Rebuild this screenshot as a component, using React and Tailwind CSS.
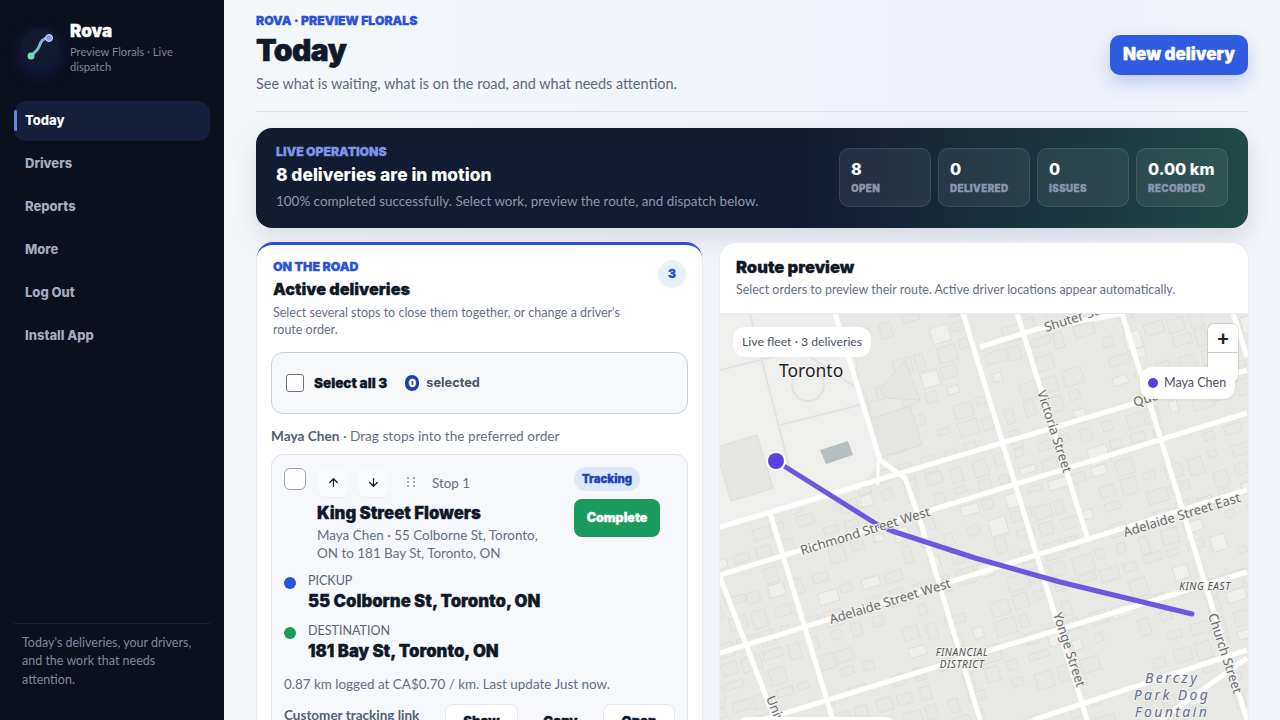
import React from 'react';
import { ArrowUp, ArrowDown } from 'lucide-react';

const HEAVY = "font-['Inter'] font-black [-webkit-text-stroke:0.3px]";

const NAV = ['Today', 'Drivers', 'Reports', 'More', 'Log Out', 'Install App'];

const STATS = [
  { value: '8', label: 'OPEN' },
  { value: '0', label: 'DELIVERED' },
  { value: '0', label: 'ISSUES' },
  { value: '0.00 km', label: 'RECORDED' },
];

const ROADS = [
  [720, 527, 1247, 370],
  [720, 575, 1247, 413],
  [720, 653, 1247, 490],
  [720, 733, 1247, 572],
  [1033, 720, 1247, 650],
  [1160, 720, 1247, 658],
  [980, 347, 1050, 325],
  [1047, 327, 1120, 314],
  [720, 577, 775, 720],
  [770, 513, 833, 720],
  [920, 520, 980, 720],
  [963, 313, 1087, 720],
  [1017, 313, 1087, 537],
  [1122, 313, 1247, 720],
  [1233, 313, 1247, 357],
];

const LABELS = [
  { text: 'Shuter Street', x: 1046, y: 332, r: -18 },
  { text: 'Victoria Street', x: 1037, y: 392, r: 72 },
  { text: 'Queen', x: 1135, y: 407, r: -18 },
  { text: 'Adelaide Street East', x: 1125, y: 537, r: -17 },
  { text: 'Richmond Street West', x: 802, y: 555, r: -17 },
  { text: 'Adelaide Street West', x: 831, y: 624, r: -17 },
  { text: 'Yonge Street', x: 1053, y: 614, r: 72 },
  { text: 'Church Street', x: 1208, y: 615, r: 72 },
  { text: 'University', x: 766, y: 698, r: 68 },
];

// deterministic building outlines laid along the street grid
function buildBlocks() {
  const blocks = [];
  let seed = 11;
  const next = () => {
    seed = (seed * 16807) % 2147483647;
    return seed / 2147483647;
  };
  for (let gx = 0; gx < 30; gx++) {
    for (let gy = 0; gy < 24; gy++) {
      if (next() < 0.25) continue;
      blocks.push({
        key: `${gx}-${gy}`,
        x: 640 + gx * 23 + next() * 3,
        y: 300 + gy * 20 + next() * 3,
        w: 8 + next() * 13,
        h: 6 + next() * 12,
        light: next() > 0.88,
      });
    }
  }
  return blocks;
}

const BLOCKS = buildBlocks();

function RouteMap() {
  return (
    <svg viewBox="720 314 528 529" className="absolute inset-0 h-full w-full">
      <rect x="720" y="314" width="528" height="529" fill="#e8e8e4" />
      <g transform="rotate(-17 984 517)">
        {BLOCKS.map((b) => (
          <rect
            key={b.key}
            x={b.x}
            y={b.y}
            width={b.w}
            height={b.h}
            fill={b.light ? '#efefec' : '#e7e7e3'}
            stroke="#deded9"
            strokeWidth="1"
          />
        ))}
      </g>
      {/* park and plaza area around city hall */}
      <path d="M720 314H835L880 460L860 490L720 530Z" fill="#efefed" />
      <g fill="#e5e5e1" stroke="#dcdcd8">
        <rect x="722" y="440" width="44" height="56" transform="rotate(-17 744 468)" />
        <rect x="873" y="412" width="44" height="40" transform="rotate(-17 895 432)" />
        <path d="M880 390L905 360L920 400L885 398Z" />
      </g>
      <path d="M820 450L848 441L853 455L826 464Z" fill="#b5bfbf" />
      <g stroke="#e2e2e0" strokeWidth="2" fill="none">
        <path d="M750 314L790 470" />
        <path d="M720 370L800 350L860 390" />
        <circle cx="808" cy="385" r="16" />
        <path d="M780 425L880 400" />
      </g>
      <g stroke="#ffffff" strokeWidth="5">
        {ROADS.map((r, i) => (
          <line key={i} x1={r[0]} y1={r[1]} x2={r[2]} y2={r[3]} />
        ))}
      </g>
      <path d="M835 313L880 460L905 478L920 520" fill="none" stroke="#ffffff" strokeWidth="5" />
      <path d="M878 462L878 485" fill="none" stroke="#ffffff" strokeWidth="3" />
      <path
        d="M776 461L878 525L892 531L975 558L1060 582L1192 614"
        fill="none"
        stroke="#6d56e0"
        strokeWidth="5"
        strokeLinecap="round"
        strokeLinejoin="round"
      />
      <circle cx="776" cy="461" r="10" fill="#ffffff" />
      <circle cx="776" cy="461" r="8" fill="#5b3fe0" />
      <g fontFamily="'Noto Sans', sans-serif" fontSize="13" fill="#6b6b6b" stroke="#f2f2f0" strokeWidth="2" paintOrder="stroke">
        {LABELS.map((l) => (
          <text key={l.text} x={l.x} y={l.y} transform={`rotate(${l.r} ${l.x} ${l.y})`}>
            {l.text}
          </text>
        ))}
      </g>
      <text x="779" y="377" fontFamily="'Noto Sans', sans-serif" fontSize="17.5" fill="#222222" stroke="#f5f5f3" strokeWidth="2" paintOrder="stroke">
        Toronto
      </text>
      <g fontFamily="'Noto Sans', sans-serif" fontSize="10" fontStyle="italic" fill="#555555" letterSpacing="0.6" textAnchor="middle" stroke="#f2f2f0" strokeWidth="2" paintOrder="stroke">
        <text x="962" y="656">FINANCIAL</text>
        <text x="962" y="668">DISTRICT</text>
        <text x="1205" y="590">KING EAST</text>
      </g>
      <g fontFamily="'Noto Sans', sans-serif" fontSize="14" fontStyle="italic" fill="#67718f" letterSpacing="2.4" textAnchor="middle" stroke="#f2f2f0" strokeWidth="2" paintOrder="stroke">
        <text x="1172" y="683">Berczy</text>
        <text x="1172" y="700">Park Dog</text>
        <text x="1172" y="717">Fountain</text>
      </g>
    </svg>
  );
}

function Logo() {
  return (
    <div className="relative h-[38px] w-[38px] shrink-0 rounded-full bg-[#111a2e] shadow-[0_6px_18px_rgba(40,70,170,0.35)]">
      <svg viewBox="0 0 38 38" className="h-full w-full">
        <path d="M10 28L16 22C20 18 18 11 27 10" fill="none" stroke="#7fb4d0" strokeWidth="3" strokeLinecap="round" />
        <circle cx="10" cy="28" r="3.5" fill="#79d8b8" />
        <circle cx="28" cy="10" r="3.5" fill="#8d97ea" stroke="#dfe3fb" strokeWidth="1" />
      </svg>
    </div>
  );
}

function Sidebar() {
  return (
    <aside className="flex h-screen w-[224px] shrink-0 flex-col bg-[#0c0f1c] px-[14px]">
      <div className="flex gap-[11px] pl-[7px] pt-[28px]">
        <Logo />
        <div className="-mt-[10px] min-w-0">
          <div className={`${HEAVY} text-[17px] leading-[26px] text-white`}>Rova</div>
          <div className="text-[11.2px] leading-[15px] text-[#7f8799]">Preview Florals · Live dispatch</div>
        </div>
      </div>
      <nav className="mt-[27px] flex flex-col gap-[3px]">
        {NAV.map((item, i) => (
          <div
            key={item}
            className={`relative flex h-10 items-center rounded-xl pl-[11px] font-['Inter'] text-[13px] font-extrabold ${
              i === 0 ? 'bg-[#151f3a] text-white' : 'text-[#a3abbc]'
            }`}
          >
            {i === 0 && <span className="absolute left-0 top-[9px] h-[21px] w-[3px] rounded-sm bg-[#6a7fe8]" />}
            {item}
          </div>
        ))}
      </nav>
      <div className="mt-auto border-t border-[#1c2130] px-2 pb-[31px] pt-[10px] text-[12.5px] leading-[18.5px] text-[#7f8799]">
        Today's deliveries, your drivers, and the work that needs attention.
      </div>
    </aside>
  );
}

function StatBox({ value, label }) {
  return (
    <div className="h-[59px] w-[92px] rounded-[10px] border border-white/10 bg-white/[0.07] px-[11px] pt-[9px]">
      <div className="font-['Inter'] text-[16.2px] leading-[22px] font-extrabold text-white">{value}</div>
      <div className={`${HEAVY} mt-[2px] text-[9.8px] leading-[14px] tracking-[0.4px] text-[#8b97ad]`}>{label}</div>
    </div>
  );
}

function ArrowButton({ icon: Icon }) {
  return (
    <div className="flex h-[30px] w-[32px] items-center justify-center rounded-lg bg-[#f8fafc] text-[#111827] shadow-[0_1px_2px_rgba(15,23,42,0.05)]">
      <Icon size={13} strokeWidth={2.25} />
    </div>
  );
}

function Place({ dot, label, address }) {
  return (
    <div className="flex items-start gap-[12px]">
      <span className={`mt-[5px] h-3 w-3 shrink-0 rounded-full ${dot}`} />
      <div>
        <div className="text-[12.5px] leading-[18px] text-[#5b6577]">{label}</div>
        <div className={`${HEAVY} text-[16.7px] leading-[23px] text-[#111827]`}>{address}</div>
      </div>
    </div>
  );
}

function ActiveDeliveries() {
  return (
    <section className="h-[600px] w-[445px] shrink-0 rounded-2xl border-t-[3px] border-[#2a52d8] bg-white px-[14px] shadow-[0_0_0_1px_#e6eaf1]">
      <div className="flex items-start justify-between pl-[2px] pr-[2px] pt-[14px]">
        <div>
          <div className={`${HEAVY} text-[12.4px] leading-[16px] text-[#2a52d8]`}>ON THE ROAD</div>
          <h2 className={`${HEAVY} mt-[2px] text-[16.2px] leading-[24px] text-[#111827]`}>Active deliveries</h2>
          <p className="mt-[3px] w-[360px] text-[12.5px] leading-[17px] text-[#667085]">
            Select several stops to close them together, or change a driver's route order.
          </p>
        </div>
        <div className={`${HEAVY} mt-[1px] flex h-7 w-7 items-center justify-center rounded-full bg-[#e9effb] text-[12px] text-[#2a52d8]`}>
          3
        </div>
      </div>

      <div className="mt-[14px] flex h-[62px] items-center rounded-xl border border-[#c5d0de] bg-[#f6f8fa] pl-[14px]">
        <span className="h-[18px] w-[18px] rounded-[3px] border border-[#6b7280] bg-white" />
        <span className={`${HEAVY} ml-[10px] text-[13.5px] text-[#111827]`}>Select all 3</span>
        <span className={`${HEAVY} ml-[18px] flex h-[16px] w-[14px] items-center justify-center rounded-full bg-[#1f3fae] text-[10px] text-white`}>0</span>
        <span className="ml-[7px] font-['Inter'] text-[12.75px] font-bold text-[#4b5565]">selected</span>
      </div>

      <div className="mt-[13px] text-[13.65px] leading-[18px] text-[#667085]">
        <span className="font-bold text-[#556074]">Maya Chen</span> · Drag stops into the preferred order
      </div>

      <div className="mt-[9px] rounded-xl border border-[#dde3ec] bg-[#f6f8fb] px-[12px] pt-[12px]">
        <div className="flex justify-between pr-[15px]">
          <div className="flex items-start">
            <span className="mt-[1px] h-[22px] w-[22px] rounded-md border border-[#9aa3b2] bg-white" />
            <div className="ml-[11px] w-[245px]">
              <div className="flex items-center">
                <ArrowButton icon={ArrowUp} />
                <span className="ml-2"><ArrowButton icon={ArrowDown} /></span>
                <svg width="10" height="12" viewBox="0 0 10 12" className="ml-[17px]">
                  <g fill="#8b93a3">
                    <circle cx="2" cy="2" r="1" /><circle cx="8" cy="2" r="1" />
                    <circle cx="2" cy="6" r="1" /><circle cx="8" cy="6" r="1" />
                    <circle cx="2" cy="10" r="1" /><circle cx="8" cy="10" r="1" />
                  </g>
                </svg>
                <span className="ml-[16px] mt-[2px] text-[13.4px] text-[#667085]">Stop 1</span>
              </div>
              <h3 className={`${HEAVY} mt-[4px] text-[16.7px] leading-[24px] text-[#111827]`}>King Street Flowers</h3>
              <p className="mt-[1px] text-[13.45px] leading-[18px] text-[#667085]">
                Maya Chen · 55 Colborne St, Toronto, ON to 181 Bay St, Toronto, ON
              </p>
            </div>
          </div>
          <div className="flex w-[86px] flex-col items-start">
            <span className={`${HEAVY} flex h-6 items-center rounded-full bg-[#dbe7fb] px-2 text-[11.3px] text-[#1f45b5]`}>Tracking</span>
            <button className={`${HEAVY} mt-2 h-[38px] w-[86px] rounded-lg bg-[#1b9a5e] text-[12.5px] text-white`}>Complete</button>
          </div>
        </div>

        <div className="mt-[10px] flex flex-col gap-[9px]">
          <Place dot="bg-[#2a52d8]" label="PICKUP" address="55 Colborne St, Toronto, ON" />
          <Place dot="bg-[#1b9a5e]" label="DESTINATION" address="181 Bay St, Toronto, ON" />
        </div>

        <p className="mt-[12px] text-[13.45px] leading-[18px] text-[#667085]">
          0.87 km logged at CA$0.70 / km. Last update Just now.
        </p>

        <div className="mt-[11px] flex items-start">
          <span className="mt-[1px] w-[161px] shrink-0 text-[13.5px] font-bold text-[#556074]">Customer tracking link</span>
          <span className={`${HEAVY} flex h-9 w-[73px] items-center justify-center rounded-lg border border-[#e4e8ef] bg-white text-[13px] text-[#111827]`}>Show</span>
          <span className={`${HEAVY} flex h-9 w-[85px] items-center justify-center text-[13px] text-[#111827]`}>Copy</span>
          <span className={`${HEAVY} flex h-9 w-[72px] items-center justify-center rounded-lg border border-[#e4e8ef] bg-white text-[13px] text-[#111827]`}>Open</span>
        </div>
      </div>
    </section>
  );
}

function RoutePreview() {
  return (
    <section className="h-[600px] w-[528px] shrink-0 overflow-hidden rounded-2xl bg-white shadow-[0_0_0_1px_#e6eaf1]">
      <div className="h-[70px] px-4 pt-[13px]">
        <h2 className={`${HEAVY} text-[16.5px] leading-[22px] text-[#111827]`}>Route preview</h2>
        <p className="mt-[3px] text-[12.45px] leading-[17px] text-[#667085]">
          Select orders to preview their route. Active driver locations appear automatically.
        </p>
      </div>
      <div className="relative h-[530px] border-t border-[#e6eaf1]">
        <RouteMap />
        <div className="absolute left-[13px] top-[13px] flex h-[30px] items-center rounded-xl bg-white px-[9px] text-[12.25px] text-[#4b5565]">
          Live fleet · 3 deliveries
        </div>
        <div className="absolute left-[488px] top-[10px] w-[30px] rounded-md bg-white shadow-[0_0_0_1px_rgba(0,0,0,0.1)]">
          <div className="flex h-[29px] items-center justify-center border-b border-[#cccccc] text-[20px] leading-none font-black text-[#222222]">+</div>
          <div className="h-[29px]" />
        </div>
        <div className="absolute left-[420px] top-[53px] flex h-[32px] items-center rounded-xl bg-white pl-[8px] pr-[9px] text-[12.5px] text-[#4b5565] shadow-[0_1px_3px_rgba(15,23,42,0.08)]">
          <span className="mr-[6px] h-[10px] w-[10px] rounded-full bg-[#5b3fe0]" />
          Maya Chen
        </div>
        <div className="absolute left-[16px] top-[403px] h-[30px] w-[161px] rounded-xl bg-white" />
      </div>
    </section>
  );
}

export default function App() {
  return (
    <div className="flex h-screen overflow-hidden bg-[#f3f6fa] font-['Lato','Noto_Sans',sans-serif]">
      <Sidebar />
      <main className="min-w-0 flex-1 overflow-hidden bg-gradient-to-r from-[#f4f7fa] from-10% via-[#eef1fb] via-80% to-[#f2f5f9] px-8 pt-[14px]">
        <header className="flex h-[98px] items-start justify-between border-b border-[#dde2ea]">
          <div>
            <div className={`${HEAVY} text-[12.25px] leading-[14px] text-[#2a52d8]`}>ROVA · PREVIEW FLORALS</div>
            <h1 className="mt-[3px] font-['Inter'] text-[30px] leading-[38px] font-black tracking-[-0.5px] text-[#111827] [-webkit-text-stroke:0.6px]">Today</h1>
            <p className="mt-[5px] text-[14.45px] leading-[20px] text-[#5f6a7c]">
              See what is waiting, what is on the road, and what needs attention.
            </p>
          </div>
          <button className={`${HEAVY} mt-[21px] h-10 w-[138px] rounded-[10px] bg-[#2f5be0] text-[17px] text-white shadow-[0_8px_18px_rgba(47,91,224,0.25)]`}>
            New delivery
          </button>
        </header>

        <div className="mt-4 flex h-[100px] items-center justify-between rounded-2xl bg-gradient-to-r from-[#131b30] from-55% to-[#1f4a47] px-5 shadow-[0_10px_24px_rgba(15,23,42,0.12)]">
          <div className="-mt-[3px]">
            <div className={`${HEAVY} text-[12.2px] leading-[16px] text-[#7c94ec]`}>LIVE OPERATIONS</div>
            <div className="mt-[3px] font-['Inter'] text-[17.4px] leading-[24px] font-extrabold text-white">8 deliveries are in motion</div>
            <div className="mt-[5px] text-[13.45px] leading-[18px] text-[#8d96a8]">
              100% completed successfully. Select work, preview the route, and dispatch below.
            </div>
          </div>
          <div className="-mt-[2px] flex gap-[7px]">
            {STATS.map((s) => (
              <StatBox key={s.label} value={s.value} label={s.label} />
            ))}
          </div>
        </div>

        <div className="mt-[14px] flex gap-[18px] pl-px">
          <ActiveDeliveries />
          <div className="pt-px">
            <RoutePreview />
          </div>
        </div>
      </main>
    </div>
  );
}
